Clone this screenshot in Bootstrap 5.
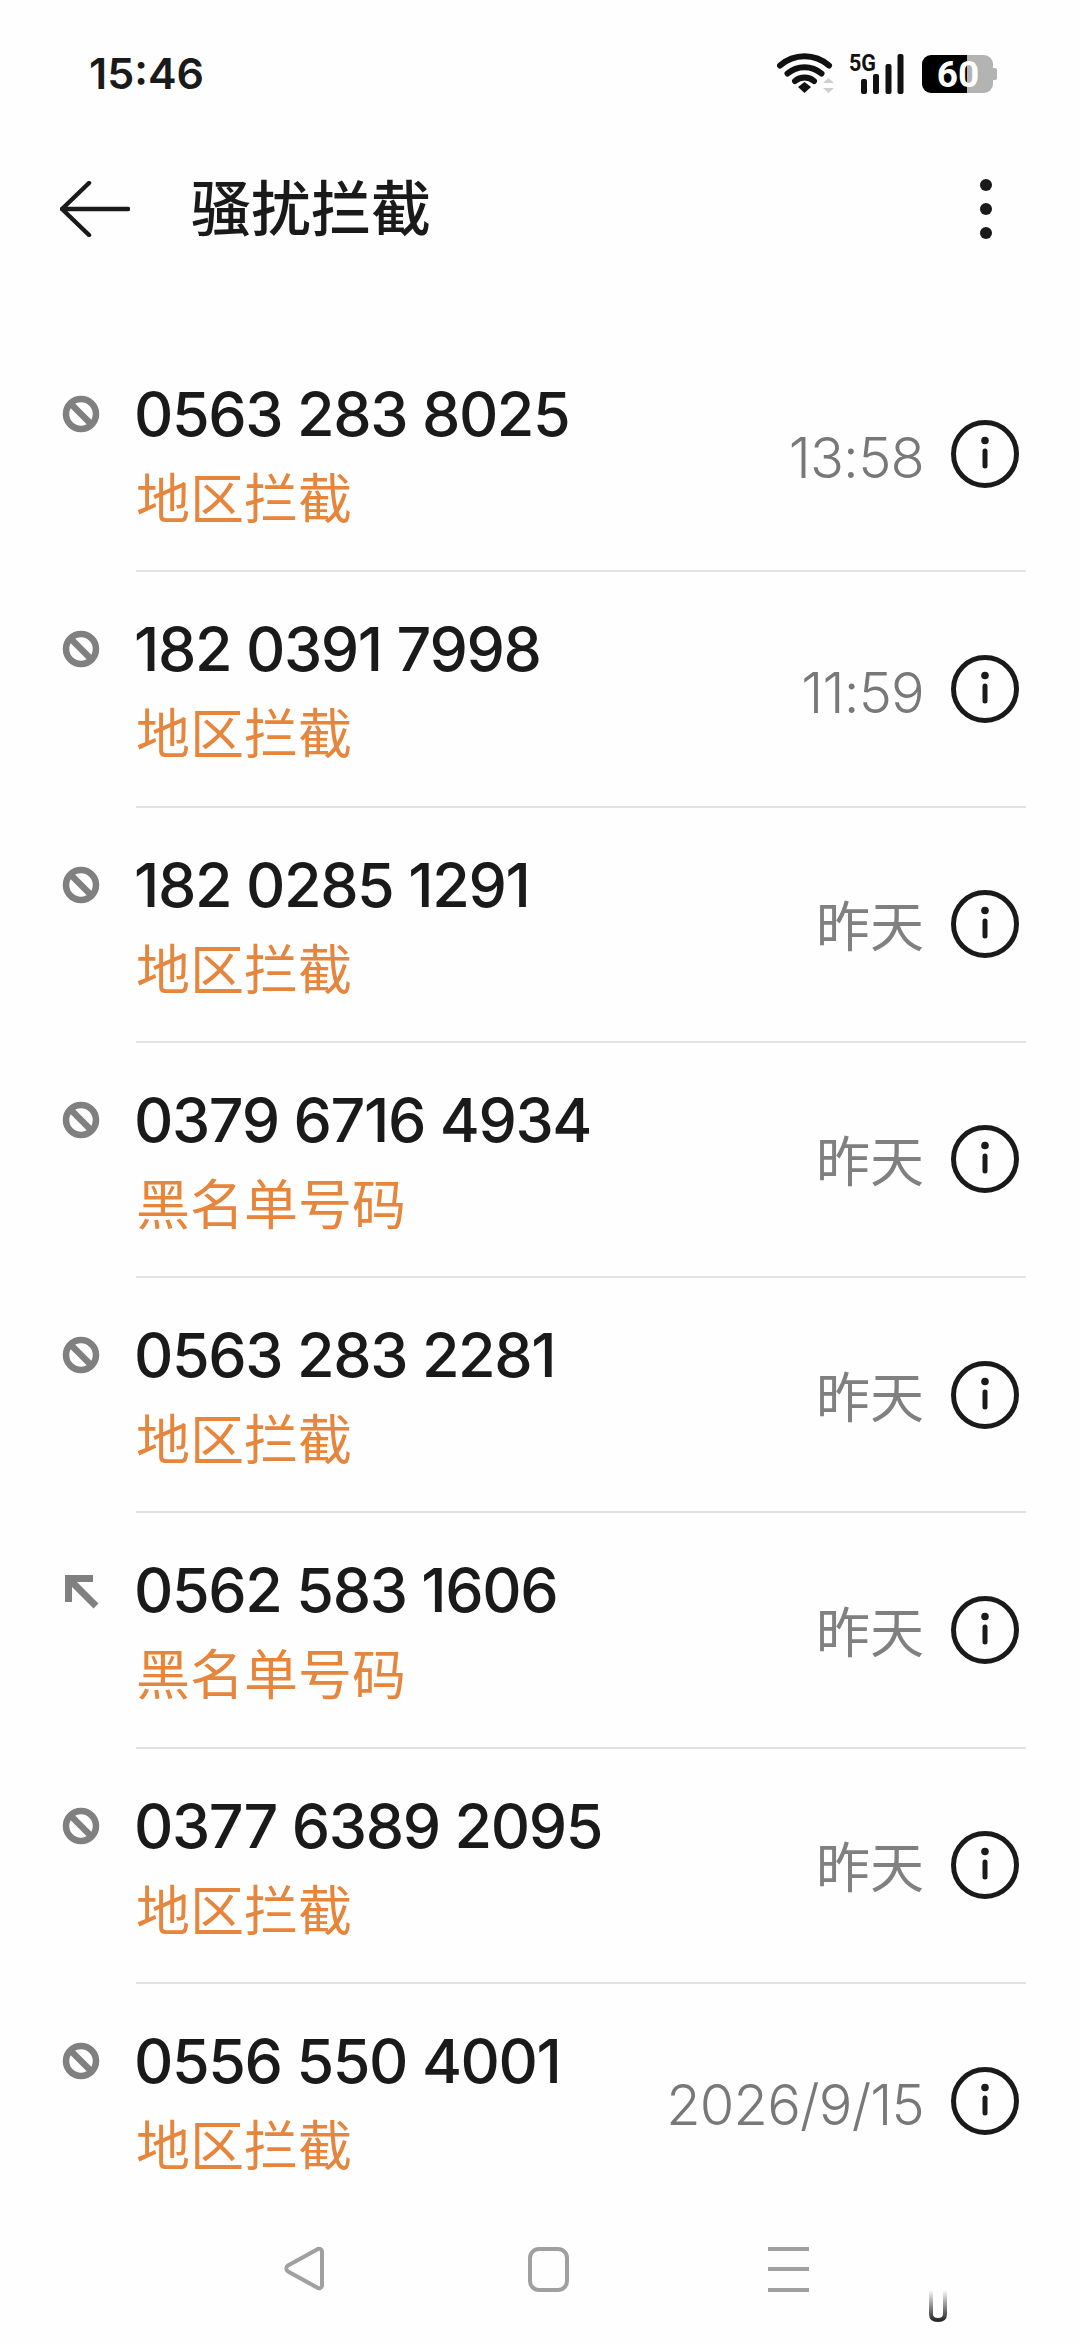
<!DOCTYPE html>
<html lang="zh">
<head>
<meta charset="utf-8">
<title>骚扰拦截</title>
<link href="https://cdn.jsdelivr.net/npm/bootstrap@5.3.0/dist/css/bootstrap.min.css" rel="stylesheet">
<style>
html,body{width:1080px;height:2344px;overflow:hidden;background:#fefefe;color:#1a1a1a;font-family:Inter,"Noto Sans CJK SC",sans-serif;}
.phone-shell{width:1080px;height:2344px;position:relative;}
.status-strip{height:146px;padding:4px 75px 0 89px;}
.clock-text{font-size:43px;font-weight:600;line-height:1;margin-top:-4px;}
.page-head{height:128px;padding:0 87px 0 60px;}
.page-title{font-size:60px;font-weight:500;line-height:1;margin:-10px 0 0 61px;font-family:"Noto Sans CJK SC",sans-serif;}
.back-svg{margin-top:-3px;}
.log-list{padding-top:63px;}
.log-row{height:235.25px;position:relative;}
.log-lead{width:136px;padding-left:60px;}
.log-body{height:235.25px;border-bottom:2px solid #e2e2e2;width:890px;}
.log-row:last-child .log-body{border-bottom:0;}
.phone-num{font-size:61px;line-height:1;margin-top:47px;color:#1a1a1a;font-weight:500;letter-spacing:-1.4px;margin-left:-2px;}
.tag-text{font-size:54px;line-height:1;color:#e6853c;margin-top:24px;margin-left:0;font-family:"Noto Sans CJK SC",sans-serif;}
.when-text{font-size:56px;font-weight:300;color:#787878;line-height:1;margin-right:26px;letter-spacing:-.8px;margin-top:8px;}
.when-cjk{font-size:54px;font-weight:400;color:#808080;font-family:"Noto Sans CJK SC",sans-serif;letter-spacing:0;margin-top:0;}
.info-wrap{width:71px;margin-right:5px;}
.nav-strip{position:absolute;left:0;right:0;bottom:0;height:124px;}
.lead-svg{display:block;margin-top:56px;}
</style>
</head>
<body>
<div class="phone-shell">
  <div class="status-strip d-flex justify-content-between align-items-center">
    <div class="clock-text">15:46</div>
    <svg width="228" height="50" viewBox="777 50 228 50" aria-hidden="true">
      <g fill="none" stroke="#111" stroke-width="6" stroke-linecap="round">
        <path d="M780 65.5a37 37 0 0 1 49 0"/>
        <path d="M787.500 73.500a26 26 0 0 1 34 0"/>
        <path d="M795 81a15 15 0 0 1 19 0"/>
      </g>
      <path d="M798 87l6.500-5 6.500 5-6.500 6z" fill="#111"/>
      <path d="M823 83l5.500-5 5.500 5zM823 88h11l-5.500 5z" fill="#cfcfcf"/>
      <text x="849" y="71" font-family="Roboto" font-weight="700" font-size="24" fill="#111" textLength="27" lengthAdjust="spacingAndGlyphs">5G</text>
      <rect x="861" y="79" width="6" height="15" rx="2" fill="#111"/>
      <rect x="873" y="74" width="6" height="20" rx="2" fill="#111"/>
      <rect x="885.500" y="64" width="6" height="30" rx="2" fill="#111"/>
      <rect x="897.500" y="54" width="6" height="40" rx="2" fill="#111"/>
      <path d="M967 55h-36a9 9 0 0 0-9 9v20a9 9 0 0 0 9 9h36z" fill="#000"/>
      <path d="M967 55h17a9 9 0 0 1 9 9v20a9 9 0 0 1-9 9h-17z" fill="#b3b3b3"/>
      <path d="M993 68h2a2 2 0 0 1 2 2v8a2 2 0 0 1-2 2h-2z" fill="#b3b3b3"/>
      <text x="958" y="87" text-anchor="middle" font-family="Roboto" font-weight="700" font-size="37" fill="#fff">60</text>
    </svg>
  </div>
  <div class="page-head d-flex align-items-center">
    <svg class="back-svg" width="70" height="56" viewBox="60 181 70 56" aria-hidden="true"><path d="M89 183L62 209L89 235M62 209H128" fill="none" stroke="#1a1a1a" stroke-width="4.500" stroke-linecap="round" stroke-linejoin="round"/></svg>
    <h1 class="page-title flex-grow-1">骚扰拦截</h1>
    <svg class="back-svg" width="14" height="62" viewBox="0 0 14 62" aria-hidden="true"><circle cx="7" cy="7" r="6" fill="#1a1a1a"/><circle cx="7" cy="31" r="6" fill="#1a1a1a"/><circle cx="7" cy="55" r="6" fill="#1a1a1a"/></svg>
  </div>
  <div class="log-list">
    <div class="log-row d-flex">
      <div class="log-lead"><svg class="lead-svg" width="42" height="42" viewBox="0 0 42 42"><use href="#blk"/></svg></div>
      <div class="log-body d-flex justify-content-between align-items-center">
        <div class="align-self-start"><div class="phone-num">0563 283 8025</div><div class="tag-text">地区拦截</div></div>
        <div class="d-flex align-items-center"><span class="when-text">13:58</span><div class="info-wrap"><svg width="70" height="70" viewBox="0 0 70 70"><use href="#inf"/></svg></div></div>
      </div>
    </div>
    <div class="log-row d-flex">
      <div class="log-lead"><svg class="lead-svg" width="42" height="42" viewBox="0 0 42 42"><use href="#blk"/></svg></div>
      <div class="log-body d-flex justify-content-between align-items-center">
        <div class="align-self-start"><div class="phone-num">182 0391 7998</div><div class="tag-text">地区拦截</div></div>
        <div class="d-flex align-items-center"><span class="when-text">11:59</span><div class="info-wrap"><svg width="70" height="70" viewBox="0 0 70 70"><use href="#inf"/></svg></div></div>
      </div>
    </div>
    <div class="log-row d-flex">
      <div class="log-lead"><svg class="lead-svg" width="42" height="42" viewBox="0 0 42 42"><use href="#blk"/></svg></div>
      <div class="log-body d-flex justify-content-between align-items-center">
        <div class="align-self-start"><div class="phone-num">182 0285 1291</div><div class="tag-text">地区拦截</div></div>
        <div class="d-flex align-items-center"><span class="when-text when-cjk">昨天</span><div class="info-wrap"><svg width="70" height="70" viewBox="0 0 70 70"><use href="#inf"/></svg></div></div>
      </div>
    </div>
    <div class="log-row d-flex">
      <div class="log-lead"><svg class="lead-svg" width="42" height="42" viewBox="0 0 42 42"><use href="#blk"/></svg></div>
      <div class="log-body d-flex justify-content-between align-items-center">
        <div class="align-self-start"><div class="phone-num">0379 6716 4934</div><div class="tag-text">黑名单号码</div></div>
        <div class="d-flex align-items-center"><span class="when-text when-cjk">昨天</span><div class="info-wrap"><svg width="70" height="70" viewBox="0 0 70 70"><use href="#inf"/></svg></div></div>
      </div>
    </div>
    <div class="log-row d-flex">
      <div class="log-lead"><svg class="lead-svg" width="42" height="42" viewBox="0 0 42 42"><use href="#blk"/></svg></div>
      <div class="log-body d-flex justify-content-between align-items-center">
        <div class="align-self-start"><div class="phone-num">0563 283 2281</div><div class="tag-text">地区拦截</div></div>
        <div class="d-flex align-items-center"><span class="when-text when-cjk">昨天</span><div class="info-wrap"><svg width="70" height="70" viewBox="0 0 70 70"><use href="#inf"/></svg></div></div>
      </div>
    </div>
    <div class="log-row d-flex">
      <div class="log-lead"><svg class="lead-svg" width="42" height="42" viewBox="0 0 42 42"><path d="M8.500 33V9.500H33M8.500 9.500L36 37" fill="none" stroke="#808080" stroke-width="7"/></svg></div>
      <div class="log-body d-flex justify-content-between align-items-center">
        <div class="align-self-start"><div class="phone-num">0562 583 1606</div><div class="tag-text">黑名单号码</div></div>
        <div class="d-flex align-items-center"><span class="when-text when-cjk">昨天</span><div class="info-wrap"><svg width="70" height="70" viewBox="0 0 70 70"><use href="#inf"/></svg></div></div>
      </div>
    </div>
    <div class="log-row d-flex">
      <div class="log-lead"><svg class="lead-svg" width="42" height="42" viewBox="0 0 42 42"><use href="#blk"/></svg></div>
      <div class="log-body d-flex justify-content-between align-items-center">
        <div class="align-self-start"><div class="phone-num">0377 6389 2095</div><div class="tag-text">地区拦截</div></div>
        <div class="d-flex align-items-center"><span class="when-text when-cjk">昨天</span><div class="info-wrap"><svg width="70" height="70" viewBox="0 0 70 70"><use href="#inf"/></svg></div></div>
      </div>
    </div>
    <div class="log-row d-flex">
      <div class="log-lead"><svg class="lead-svg" width="42" height="42" viewBox="0 0 42 42"><use href="#blk"/></svg></div>
      <div class="log-body d-flex justify-content-between align-items-center">
        <div class="align-self-start"><div class="phone-num">0556 550 4001</div><div class="tag-text">地区拦截</div></div>
        <div class="d-flex align-items-center"><span class="when-text">2026/9/15</span><div class="info-wrap"><svg width="70" height="70" viewBox="0 0 70 70"><use href="#inf"/></svg></div></div>
      </div>
    </div>
  </div>
  <div class="nav-strip">
    <svg width="1080" height="124" viewBox="0 2220 1080 124" aria-hidden="true">
      <defs><linearGradient id="fadeU" x1="0" y1="2290" x2="0" y2="2322" gradientUnits="userSpaceOnUse"><stop offset="0" stop-color="#111" stop-opacity="0"/><stop offset="1" stop-color="#111" stop-opacity=".95"/></linearGradient></defs>
      <path d="M322 2252a3 3 0 0 0-5-2.500l-29 16a3.500 3.500 0 0 0 0 6l29 16a3 3 0 0 0 5-2.500z" fill="none" stroke="#a0a0a0" stroke-width="4"/>
      <rect x="530" y="2249" width="37" height="41" rx="9" fill="none" stroke="#a0a0a0" stroke-width="4"/>
      <path d="M768 2249h41M768 2269h41M768 2290h41" fill="none" stroke="#a0a0a0" stroke-width="4"/>
      <path d="M931 2290V2314q0 6 7 6t7-6V2290" fill="none" stroke="url(#fadeU)" stroke-width="4"/>
    </svg>
  </div>
  <svg width="0" height="0" class="position-absolute" aria-hidden="true"><defs>
    <g id="blk"><circle cx="21" cy="21" r="15" fill="none" stroke="#808080" stroke-width="6.500"/><path d="M10.500 10.500L31.500 31.500" stroke="#808080" stroke-width="6.500"/></g>
    <g id="inf"><circle cx="35" cy="35" r="31.500" fill="none" stroke="#1a1a1a" stroke-width="5"/><circle cx="35" cy="21.500" r="3.800" fill="#1a1a1a"/><path d="M35 32V47" stroke="#1a1a1a" stroke-width="5" stroke-linecap="round"/></g>
  </defs></svg>
</div>
</body>
</html>
